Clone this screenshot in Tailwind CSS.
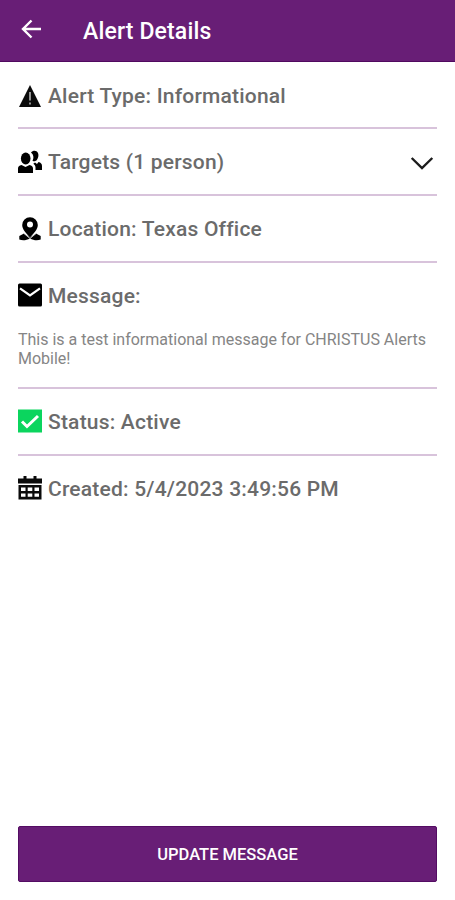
<!DOCTYPE html>
<html lang="en">
<head>
  <title>Alert Details</title>
  <meta charset="UTF-8">
  <meta name="viewport" content="width=device-width, initial-scale=1.0">
  <script src="https://cdn.jsdelivr.net/npm/@tailwindcss/browser@4"></script>
</head>

<body class="bg-white h-[900px] flex flex-col overflow-hidden font-['Roboto',sans-serif] text-[#6b6b6b]">

  <!-- Top bar -->
  <header class="h-[62px] shrink-0 bg-[#681e76] border-b border-[#50095f] text-white flex items-center pl-[21px]">
    <svg class="w-5 h-5 -mt-1" viewBox="0 0 20 20" fill="none" stroke="currentColor" stroke-width="2.4">
      <path d="M20 10H2.500M10.500 1.500 2 10l8.500 8.500" />
    </svg>
    <h1 class="ml-[42px] pt-0.5 text-[23px] leading-none font-medium tracking-[0.15px] whitespace-nowrap">Alert Details</h1>
  </header>

  <!-- Alert fields -->
  <main class="flex-1 px-[18px] text-[21px] leading-6 font-medium tracking-[0.2px] whitespace-nowrap">

    <section class="h-[67px] pt-0.5 border-b-2 border-[#d8c3db] flex items-center">
      <svg class="w-6 h-6 mr-1.5" viewBox="0 0 24 24">
        <path d="M12 1 23 23H1Z" fill="#0b0b0b" />
        <path d="M12 8v8.500M12 18.500v2" stroke="#ddd" stroke-width="1.300" />
      </svg>
      <span>Alert Type: Informational</span>
    </section>

    <section class="h-[67px] border-b-2 border-[#d8c3db] flex items-center">
      <svg class="w-6 h-6 mr-1.5" viewBox="0 0 24 24" fill="#000">
        <path d="M13 2.500C14.500.5 17 .2 18.500 1.200c2.700 1.700 2.300 6 .5 8.500-1 1.500-3 2-4.500 1 1.500-2.500 1.300-6-1.500-8.200Z" />
        <ellipse cx="7.700" cy="8.500" rx="4.800" ry="6" />
        <path d="M0 23v-4.500c0-1.700 1.200-2.800 3.500-3.500l4 2 4-2c2.300.7 3.500 1.800 3.500 3.500V23Z" />
        <path d="M17.500 20v-2.500c0-1.500-1-3-2.200-3.700l1.700-1.300 2 1.500 1.500-2c2.300.6 3.500 2 3.500 4v4Z" />
      </svg>
      <span>Targets (1 person)</span>
      <svg class="w-6 h-6 ml-auto mr-[3px]" viewBox="0 0 24 24" fill="none" stroke="#1c1c1c" stroke-width="2.400">
        <path d="M1.700 8 12 18 22.300 8" />
      </svg>
    </section>

    <section class="h-[67px] border-b-2 border-[#d8c3db] flex items-center">
      <svg class="w-6 h-6 mr-1.5" viewBox="0 0 24 24">
        <path d="M6 16.500 1.300 19v3.500c3 1.200 7 1 10.700-1 3.700 2 7.700 2.200 10.700 1V19L18 16.500l-6 4Z" fill="#000" />
        <path d="M12 20.500C8.500 16.500 4.200 12.500 4.200 8a7.800 7.800 0 0 1 15.600 0c0 4.500-4.300 8.500-7.800 12.500Z" fill="#000" />
        <path d="M6 16.500 12 21.500l6-5" fill="none" stroke="#fff" stroke-width="0.800" />
        <circle cx="12" cy="7.500" r="3" fill="#fff" />
      </svg>
      <span>Location: Texas Office</span>
    </section>

    <section class="h-[126px] border-b-2 border-[#d8c3db]">
      <div class="h-[66px] flex items-center">
        <svg class="w-6 h-6 mr-1.5 -mt-0.5" viewBox="0 0 24 24">
          <rect x="0" y="0.500" width="24" height="23" rx="1.500" fill="#000" />
          <path d="M2 5.300 12 12.500 22 5.300" fill="none" stroke="#fff" stroke-width="2.200" />
        </svg>
        <span>Message:</span>
      </div>
      <p class="pt-px text-[16px] leading-[19px] font-normal tracking-normal text-[#858585]">This is a test informational message for CHRISTUS Alerts<br>Mobile!</p>
    </section>

    <section class="h-[67px] border-b-2 border-[#d8c3db] flex items-center">
      <svg class="w-6 h-6 mr-1.5 -mt-0.5" viewBox="0 0 24 24">
        <rect x="0" y="0.500" width="24" height="23" fill="#0bd55e" />
        <path d="m4 12.500 5 5L20 7" fill="none" stroke="#fff" stroke-width="3" />
      </svg>
      <span>Status: Active</span>
    </section>

    <section class="h-[65px] flex items-center">
      <svg class="w-6 h-6 mr-1.5 -mt-0.5" viewBox="0 0 24 24">
        <path d="M5.500 0h3v2.500h7V0h3v2.500H24v5H0v-5h5.500ZM.5 9h23v14.500H.5Z" fill="#0b0b0b" />
        <path d="M3 11.500h4.500v3.500H3Zm6.700 0h4.600v3.500H9.700Zm6.800 0H21v3.500h-4.500ZM3 17.500h4.500v3.300H3Zm6.700 0h4.600v3.300H9.700Zm6.800 0H21v3.300h-4.500Z" fill="#fff" />
      </svg>
      <span>Created: 5/4/2023 3:49:56 PM</span>
    </section>
  </main>

  <!-- Action button -->
  <footer class="px-[18px] pb-[18px]">
    <button class="block w-full h-14 pt-0.5 rounded-xs bg-[#681e76] border border-[#540c63] text-white text-[16.500px] font-medium">UPDATE MESSAGE</button>
  </footer>

</body>
</html>
